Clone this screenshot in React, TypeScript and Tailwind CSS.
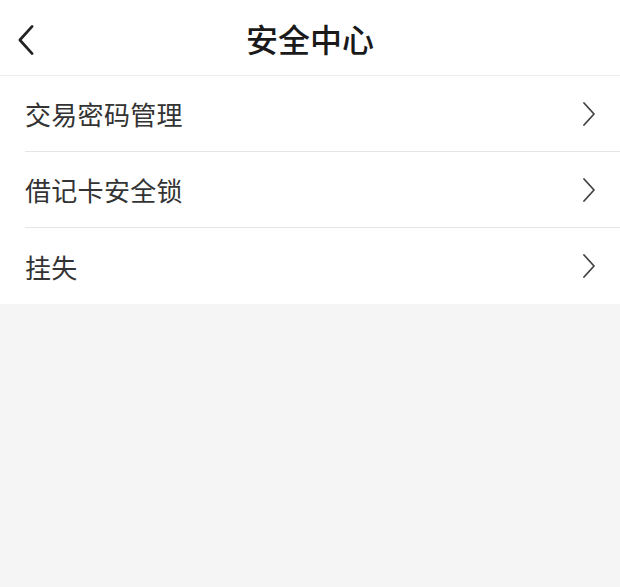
import React from 'react';

const items = ['交易密码管理', '借记卡安全锁', '挂失'];

function Chevron({ left = false }: { left?: boolean }) {
  return (
    <svg
      width={left ? 20 : 16}
      height={left ? 32 : 26}
      viewBox="0 0 16 26"
      fill="none"
      stroke="currentColor"
      strokeWidth={left ? 2.2 : 1.8}
      strokeLinecap="round"
      strokeLinejoin="round"
    >
      {left ? <path d="M13 2 L3 13 L13 24" /> : <path d="M3 2 L13 13 L3 24" />}
    </svg>
  );
}

export default function App() {
  return (
    <div
      className="flex min-h-[587px] w-full flex-col bg-[#f5f5f5]"
      style={{ fontFamily: '"Noto Sans CJK SC", "Noto Sans", sans-serif' }}
    >
      <header className="relative flex h-[76px] items-center justify-center border-b border-[#ececec] bg-white">
        <button className="absolute left-[16px] top-[24px] text-[#222]">
          <Chevron left />
        </button>
        <h1 className="text-[32px] font-medium text-[#1a1a1a]">安全中心</h1>
      </header>
      <ul className="bg-white">
        {items.map((label, i) => (
          <li key={label} className="pl-[25px]">
            <div
              className={`flex h-[76px] items-center justify-between pr-[23px] ${
                i < items.length - 1 ? 'border-b border-[#e5e5e5]' : ''
              }`}
            >
              <span className="text-[26px] tracking-[0.3px] text-[#333]">{label}</span>
              <span className="text-[#444]">
                <Chevron />
              </span>
            </div>
          </li>
        ))}
      </ul>
    </div>
  );
}
